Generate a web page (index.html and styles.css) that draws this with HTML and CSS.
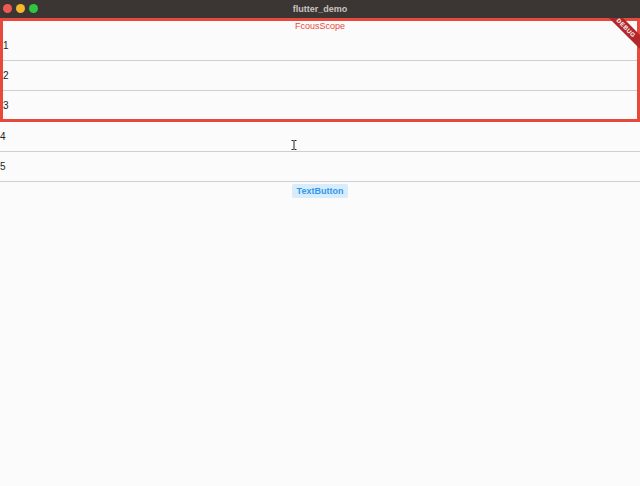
FILE: index.html
```html
<!DOCTYPE html>
<html lang="en">
<head>
    <meta charset="UTF-8">
    <title>flutter_demo</title>
    <link rel="stylesheet" href="styles.css">
</head>
<body>
    <div class="window">
        <div class="titlebar">
            <div class="lights">
                <span class="light red"></span>
                <span class="light yellow"></span>
                <span class="light green"></span>
            </div>
            <span class="title">flutter_demo</span>
        </div>

        <div class="app">
            <!-- focus scope -->
            <div class="scope">
                <div class="scope-label">FcousScope</div>
                <div class="row">1</div>
                <div class="row">2</div>
                <div class="row last">3</div>
            </div>

            <div class="row">4</div>
            <div class="row">5</div>

            <div class="actions">
                <button class="text-btn">TextButton</button>
            </div>

            <div class="debug-banner"><span>DEBUG</span></div>

            <svg class="cursor" width="6" height="10" viewBox="0 0 6 10">
                <path d="M0.5 0.5h2M3.5 0.5h2M3 0.5v9M0.5 9.5h2M3.5 9.5h2" stroke="#222" stroke-width="1" fill="none"/>
            </svg>
        </div>
    </div>
</body>
</html>
```

FILE: styles.css
```css
:root {
    --bar-color: #3b3633;
    --scope-color: #e8493d;
    --line-color: #cfcfcf;
    --blue: #2f97ee;
}

html, body {
    margin: 0;
    height: 100%;
}

body {
    background: #fcfbfb;
    font-family: 'Liberation Sans', Arial, sans-serif;
}

.window {
    display: flex;
    flex-direction: column;
    height: 100%;
}

.titlebar {
    height: 18px;
    background: var(--bar-color);
    display: flex;
    align-items: center;
    justify-content: center;
    position: relative;
}

.lights {
    position: absolute;
    left: 3px;
    top: 4px;
    display: flex;
    gap: 4px;
}

.light {
    width: 9px;
    height: 9px;
    border-radius: 50%;
}

.red { background: #ee5a52; }
.yellow { background: #f4b82f; }
.green { background: #2ec742; }

.title {
    color: #c8c4c1;
    font-size: 9px;
    font-weight: bold;
}

.app {
    position: relative;
    flex: 1;
    overflow: hidden;
}

.scope {
    border: 3px solid var(--scope-color);
    height: 98px;
}

.scope-label {
    color: var(--scope-color);
    font-size: 9px;
    text-align: center;
    height: 10px;
    line-height: 10px;
}

.row {
    height: 29px;
    border-bottom: 1px solid var(--line-color);
    display: flex;
    align-items: center;
    font-size: 10px;
    color: #222;
}

.row.last {
    height: 28px;
    border-bottom: none;
}

.actions {
    display: flex;
    justify-content: center;
    padding-top: 2px;
}

.text-btn {
    background: #d9ecfb;
    color: var(--blue);
    border: none;
    border-radius: 2px;
    font-family: 'Liberation Sans', Arial, sans-serif;
    font-size: 9px;
    font-weight: bold;
    padding: 0 5px;
    height: 14px;
}

.debug-banner {
    position: absolute;
    top: 5px;
    right: -16px;
    width: 60px;
    height: 10px;
    background: #b2282a;
    transform: rotate(45deg);
    display: flex;
    align-items: center;
    justify-content: center;
}

.debug-banner span {
    color: #fff;
    font-size: 6px;
    font-weight: bold;
    letter-spacing: 0.5px;
}

.cursor {
    position: absolute;
    left: 291px;
    top: 122px;
}
```
